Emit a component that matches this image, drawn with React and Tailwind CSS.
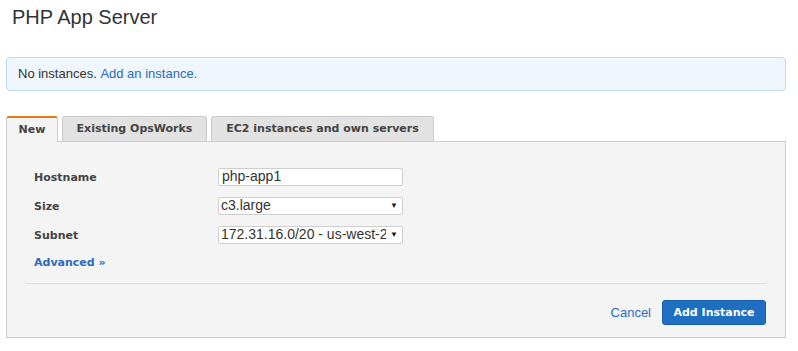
import React, { useState } from 'react'

// Formulaire "PHP App Server" : onglets + ajout d'une instance
const TABS = [
  { label: 'New', w: 'w-[52px]' },
  { label: 'Existing OpsWorks', w: 'w-[145px]' },
  { label: 'EC2 instances and own servers', w: 'w-[223px]' },
]
const BOLD = { fontFamily: '"DejaVu Sans", Verdana, sans-serif' }

const Field = ({ label, children }) => (
  <div className="flex items-center h-[29px]">
    <div className="w-[211px] pl-[27px] pt-[3px] font-bold text-[11px] text-[#444]" style={BOLD}>{label}</div>
    {children}
  </div>
)

const Select = ({ value }) => (
  <div className="w-[185px] h-[18px] bg-white border border-[#cfcfcf] rounded-[2px] flex items-center pl-[2px]">
    <span className="flex-1 overflow-hidden text-[14px] text-[#333] whitespace-nowrap">{value}</span>
    <span className="w-[16px] shrink-0 flex items-center justify-center text-[8px] text-[#222]">▼</span>
  </div>
)

const App = () => {
  const [tab, setTab] = useState(0)
  return (
    <div className="w-[798px] h-[351px] bg-white text-[#333] overflow-hidden" style={{ fontFamily: '"Liberation Sans", Arial, sans-serif' }}>
      <h1 className="pl-[12px] pt-[5px] text-[20px] leading-[25px] text-[#333]">PHP App Server</h1>

      <div className="mx-[6px] w-[780px] mt-[27px] h-[34px] border border-[#bcdcf5] bg-[#eff6fd] rounded-[4px] flex items-center pl-[11px] text-[13px]">
        No instances.&nbsp;<a className="text-[#2a6bbf] cursor-pointer">Add an instance.</a>
      </div>

      <div className="ml-[6px] w-[780px] mt-[25px]">
        <div className="flex items-end gap-[4px] h-[25px]" style={BOLD}>
          {TABS.map((t, i) => (
            <button
              key={t.label}
              onClick={() => setTab(i)}
              className={
                i === tab
                  ? `${t.w} h-[26px] -mb-px z-10 pt-[1px] bg-[#f4f4f4] border border-[#ccc] border-b-0 border-t-2 border-t-[#e07b16] rounded-t-[3px] text-[11px] font-bold text-[#444]`
                  : `${t.w} h-[25px] pt-[1px] bg-[#e2e2e2] border border-[#ccc] border-b-0 rounded-t-[3px] text-[11px] font-bold text-[#444]`
              }
            >
              {t.label}
            </button>
          ))}
        </div>
        <div className="h-[197px] border border-[#ccc] bg-[#f4f4f4] pt-[20px]">
          <Field label="Hostname">
            <div className="w-[185px] h-[18px] bg-white border border-[#cfcfcf] rounded-[2px] flex items-center pl-[3px] text-[14px] text-[#333]">php-app1</div>
          </Field>
          <Field label="Size">
            <Select value="c3.large" />
          </Field>
          <Field label="Subnet">
            <Select value="172.31.16.0/20 - us-west-2a" />
          </Field>
          <div className="pl-[27px] h-[28px] flex items-center font-bold text-[11px] text-[#2a6bbf]" style={BOLD}>Advanced »</div>
          <div className="mx-[19px] mt-[6px] border-t border-[#dedede]" />
          <div className="flex items-center justify-end gap-[11px] pr-[19px] pt-[16px]">
            <a className="text-[13px] text-[#2a6bbf] cursor-pointer">Cancel</a>
            <button className="h-[25px] w-[104px] pt-[1px] rounded-[3px] bg-[#1e6fc1] border border-[#165ea8] text-white text-[11px] font-bold" style={BOLD}>Add Instance</button>
          </div>
        </div>
      </div>
    </div>
  )
}

export default App
